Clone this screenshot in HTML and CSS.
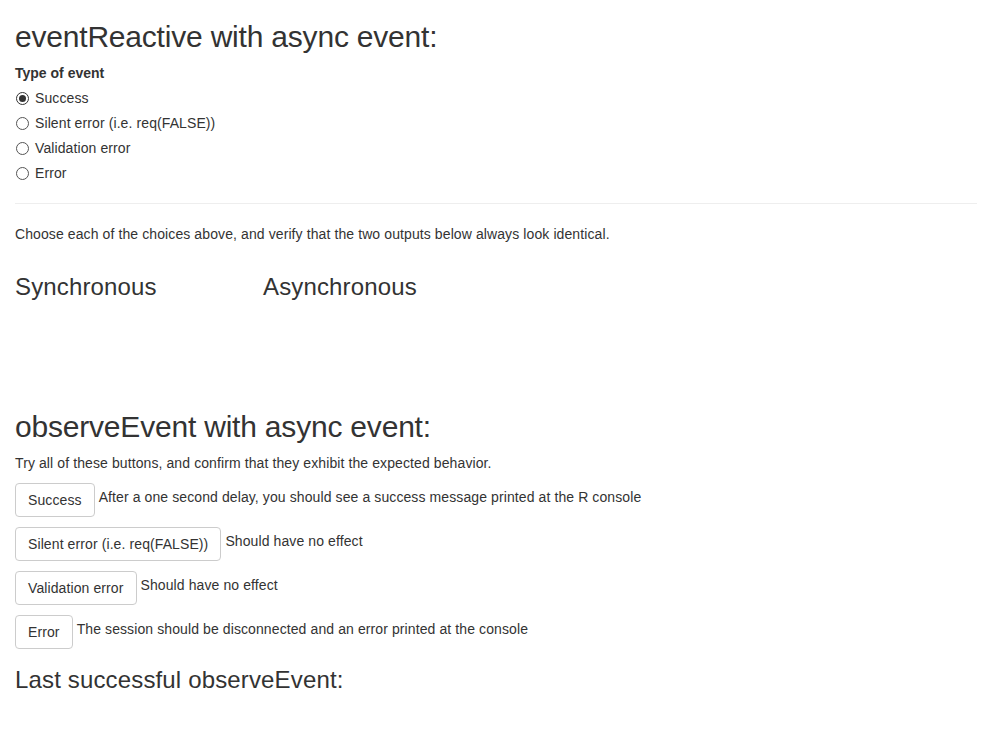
FILE: index.html
```html
<!DOCTYPE html>
<html>
<head>
<meta charset="utf-8">
<title>async events</title>
<link rel="stylesheet" href="styles.css">
</head>
<body>
<div class="container">
  <h2 class="title">eventReactive with async event:</h2>
  <div class="form-group">
    <label class="control-label">Type of event</label>
    <div class="options">
      <div class="radio"><label><span class="dot checked"></span><span>Success</span></label></div>
      <div class="radio"><label><span class="dot"></span><span>Silent error (i.e. req(FALSE))</span></label></div>
      <div class="radio"><label><span class="dot"></span><span>Validation error</span></label></div>
      <div class="radio"><label><span class="dot"></span><span>Error</span></label></div>
    </div>
  </div>
  <hr class="rule">
  <p class="para">Choose each of the choices above, and verify that the two outputs below always look identical.</p>
  <div class="row">
    <div class="col">
      <h3 class="sub">Synchronous</h3>
      <div class="output"></div>
    </div>
    <div class="col">
      <h3 class="sub">Asynchronous</h3>
      <div class="output"></div>
    </div>
  </div>
  <h2 class="title">observeEvent with async event:</h2>
  <p class="para">Try all of these buttons, and confirm that they exhibit the expected behavior.</p>
  <div class="btn-row"><button class="btn">Success</button> <span class="desc">After a one second delay, you should see a success message printed at the R console</span></div>
  <div class="btn-row"><button class="btn">Silent error (i.e. req(FALSE))</button> <span class="desc">Should have no effect</span></div>
  <div class="btn-row"><button class="btn">Validation error</button> <span class="desc">Should have no effect</span></div>
  <div class="btn-row"><button class="btn">Error</button> <span class="desc">The session should be disconnected and an error printed at the console</span></div>
  <h3 class="sub last">Last successful observeEvent:</h3>
</div>
</body>
</html>
```
FILE: styles.css
```css
html, body {
  margin: 0;
  padding: 0;
  background: #fff;
}
body {
  font-family: "Liberation Sans", Arial, Helvetica, sans-serif;
  font-size: 14px;
  line-height: 20px;
  color: #333;
  letter-spacing: 0.1px;
}
.container {
  padding: 0 15px;
}
.title {
  font-size: 30px;
  font-weight: 500;
  line-height: 1.1;
  margin: 20px 0 10px;
  letter-spacing: -0.2px;
}
.sub {
  font-size: 24px;
  font-weight: 500;
  line-height: 1.1;
  margin: 20px 0 10px;
  letter-spacing: 0.15px;
}
.sub.last {
  margin-top: 18px;
}
.form-group {
  margin-bottom: 15px;
}
.control-label {
  display: inline-block;
  font-weight: 700;
  margin-bottom: 5px;
  letter-spacing: 0;
}
.options {
  display: flex;
  flex-direction: column;
  gap: 5px;
}
.radio label {
  display: flex;
  align-items: center;
  gap: 6px;
  height: 20px;
}
.dot {
  width: 11px;
  height: 11px;
  border: 1px solid #555;
  border-radius: 50%;
  background: #fff;
  display: flex;
  align-items: center;
  justify-content: center;
  margin-left: 1px;
}
.dot.checked {
  border-color: #333;
}
.dot.checked::after {
  content: "";
  width: 7px;
  height: 7px;
  border-radius: 50%;
  background: #333;
}
.rule {
  border: 0;
  border-top: 1px solid #eee;
  margin: 20px 0;
}
.para {
  margin: 0 0 10px;
}
.row {
  display: flex;
  margin: 0 -15px;
}
.col {
  width: 25%;
  padding: 0 15px;
  box-sizing: border-box;
}
.output {
  height: 80px;
}
.btn-row {
  margin-bottom: 10px;
}
.btn {
  display: inline-block;
  vertical-align: top;
  font-family: inherit;
  font-size: 14px;
  line-height: 20px;
  letter-spacing: 0.1px;
  color: #333;
  background: #fff;
  border: 1px solid #ccc;
  border-radius: 4px;
  padding: 6px 12px;
  margin: 0;
  cursor: pointer;
}
.desc {
  display: inline-block;
  vertical-align: top;
  padding-top: 4px;
}
```
